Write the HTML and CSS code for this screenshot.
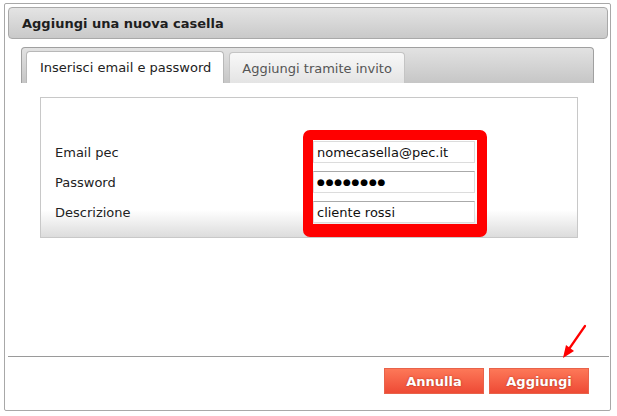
FILE: index.html
```html
<!DOCTYPE html>
<html lang="it">
<head>
    <meta charset="UTF-8">
    <title>Aggiungi una nuova casella</title>
    <link rel="stylesheet" href="styles.css">
</head>
<body>
    <div class="dialog">
        <div class="dialog-header">Aggiungi una nuova casella</div>

        <div class="tabs">
            <div class="tab active">Inserisci email e password</div>
            <div class="tab">Aggiungi tramite invito</div>
        </div>

        <div class="panel">
            <form class="box-form">
                <label for="email">Email pec</label>
                <input type="text" id="email" class="first" value="nomecasella@pec.it">

                <label for="password">Password</label>
                <input type="text" id="password" class="dots" value="●●●●●●●●">

                <label for="descrizione">Descrizione</label>
                <input type="text" id="descrizione" value="cliente rossi">
            </form>
            <div class="highlight"></div>
        </div>

        <div class="spacer"></div>
        <hr class="separator">

        <div class="footer">
            <button class="btn">Annulla</button>
            <button class="btn">Aggiungi</button>
        </div>

        <svg class="arrow" width="30" height="40" viewBox="0 0 30 40">
            <line x1="25" y1="3" x2="9" y2="26" stroke="#f00" stroke-width="2.2" stroke-linecap="round"/>
            <polygon points="3,35 6,22 14,28" fill="#f00"/>
        </svg>
    </div>
</body>
</html>
```

FILE: styles.css
```css
* {
    box-sizing: border-box;
}
body {
    margin: 0;
    background: #fff;
    font-family: 'DejaVu Sans', Verdana, sans-serif;
    font-size: 13px;
    color: #222;
}
.dialog {
    position: relative;
    margin: 3px 0 0 4px;
    width: 607px;
    height: 408px;
    border: 1px solid #a8a8a8;
    border-radius: 2px;
    display: flex;
    flex-direction: column;
}
.dialog-header {
    margin: 3px 2px 0 3px;
    height: 32px;
    padding-left: 13px;
    display: flex;
    align-items: center;
    font-weight: bold;
    color: #1e1e1e;
    border: 1px solid #a9a9a9;
    border-radius: 4px;
    background: linear-gradient(#e4e4e4, #c9c9c9);
}
.tabs {
    margin: 8px 16px 0 16px;
    height: 36px;
    padding: 4px 0 0 4px;
    display: flex;
    align-items: flex-end;
    gap: 5px;
    border: 1px solid #a0a0a0;
    border-bottom: none;
    border-radius: 4px 4px 0 0;
    background: linear-gradient(#e2e2e2, #c6c6c6);
}
.tab {
    height: 31px;
    padding: 0 12px;
    display: flex;
    align-items: center;
    white-space: nowrap;
    color: #555;
    border: 1px solid #c4c4c4;
    border-bottom: none;
    border-radius: 4px 4px 0 0;
    background: linear-gradient(#f8f8f8, #e4e4e4);
}
.tab.active {
    height: 32px;
    padding: 0 12px 0 13px;
    color: #222;
    border-color: #b8b8b8;
    background: #fff;
}
.panel {
    position: relative;
    margin: 14px 32px 0 35px;
    height: 141px;
    border: 1px solid #c8c8c8;
    background: linear-gradient(#fff 0, #fff 112px, #dcdcdc 139px);
}
.box-form {
    padding: 43px 0 0 14px;
    display: grid;
    grid-template-columns: 258px 162px;
    row-gap: 8px;
    align-items: center;
}
.box-form label {
    color: #222;
    padding-top: 1px;
}
.box-form input {
    height: 22px;
    padding: 0 3px;
    border: 1px solid #dcdcdc;
    border-top-color: #aaa;
    font-family: 'DejaVu Sans', Verdana, sans-serif;
    font-size: 13px;
    color: #111;
    background: #fff;
    outline: none;
}
.box-form input.first {
    border-top-color: #dcdcdc;
}
.box-form input.dots {
    font-size: 9px;
    letter-spacing: 0.8px;
    color: #000;
}
.highlight {
    position: absolute;
    left: 262px;
    top: 32px;
    width: 184px;
    height: 107px;
    border: 10px solid #f00;
    border-bottom-width: 13px;
    border-radius: 7px;
    pointer-events: none;
}
.spacer {
    flex: 1;
}
.separator {
    margin: 0 1px 0 3px;
    border: none;
    border-top: 1px solid #9a9a9a;
    height: 0;
}
.footer {
    padding: 11px 21px 16px 0;
    display: flex;
    justify-content: flex-end;
    gap: 5px;
}
.btn {
    width: 100px;
    height: 26px;
    border: 1px solid #e8624a;
    background: linear-gradient(#fd7858, #ee4a35);
    color: #fff;
    font-family: 'DejaVu Sans', Verdana, sans-serif;
    font-size: 13px;
    font-weight: bold;
    text-shadow: 0 0 2px rgba(120, 20, 0, 0.6);
    cursor: pointer;
}
.arrow {
    position: absolute;
    left: 555px;
    top: 319px;
}
```
